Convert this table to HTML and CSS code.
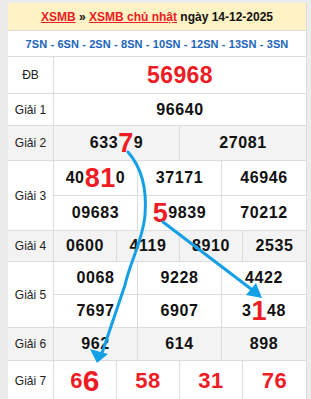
FILE: index.html
```html
<!DOCTYPE html>
<html>
<head>
<meta charset="utf-8">
<link rel="stylesheet" href="styles.css">
</head>
<body>
<div class="page">
  <div class="box">
    <div class="head"><a href="#">XSMB</a> » <a href="#">XSMB chủ nhật</a> ngày 14-12-2025</div>
    <div class="sub">7SN - 6SN - 2SN - 8SN - 10SN - 12SN - 13SN - 3SN</div>
    <div class="row db"><div class="lbl">ĐB</div><div class="vals c1"><div class="v red big">56968</div></div></div>
    <div class="row g1"><div class="lbl">Giải 1</div><div class="vals c1"><div class="v">96640</div></div></div>
    <div class="row g2 alt"><div class="lbl">Giải 2</div><div class="vals c2"><div class="v">633<span class="hl">7</span>9</div><div class="v">27081</div></div></div>
    <div class="row g3"><div class="lbl">Giải 3</div><div class="vals c3">
      <div class="v">40<span class="hl">81</span>0</div><div class="v">37171</div><div class="v">46946</div>
      <div class="v">09683</div><div class="v"><span class="hl">5</span>9839</div><div class="v">70212</div>
    </div></div>
    <div class="row g4 alt"><div class="lbl">Giải 4</div><div class="vals c4"><div class="v">0600</div><div class="v">4119</div><div class="v">8910</div><div class="v">2535</div></div></div>
    <div class="row g5"><div class="lbl">Giải 5</div><div class="vals c3">
      <div class="v">0068</div><div class="v">9228</div><div class="v">4422</div>
      <div class="v">7697</div><div class="v">6907</div><div class="v">3<span class="hl">1</span>48</div>
    </div></div>
    <div class="row g6 alt"><div class="lbl">Giải 6</div><div class="vals c3"><div class="v">962</div><div class="v">614</div><div class="v">898</div></div></div>
    <div class="row g7"><div class="lbl">Giải 7</div><div class="vals c4"><div class="v red mid">6<span class="hl">6</span></div><div class="v red mid">58</div><div class="v red mid">31</div><div class="v red mid">76</div></div></div>
  </div>
  <svg class="arrows" width="311" height="399" viewBox="0 0 311 399">
    <path d="M128 152 C 142 168, 147 190, 145 215 C 143 240, 130 262, 125 285 L 101 356" fill="none" stroke="#14a0e6" stroke-width="3" stroke-linecap="round"/>
    <polygon points="97,363 90,349 108,354" fill="#14a0e6"/>
    <path d="M163 222 L 255 292" fill="none" stroke="#14a0e6" stroke-width="3" stroke-linecap="round"/>
    <polygon points="262,298 246,295 256,283" fill="#14a0e6"/>
  </svg>
</div>
</body>
</html>
```
FILE: styles.css
```css
html, body {
  margin: 0;
  padding: 0;
  background: #ececec;
}
.page {
  position: relative;
  width: 311px;
  height: 399px;
  overflow: hidden;
  padding: 3px 4px 0 8px;
  box-sizing: border-box;
  font-family: "Liberation Sans", Arial, sans-serif;
}
.box {
  background: #fff;
  border-right: 1px solid #dcdcdc;
}
.head {
  height: 27px;
  background: #fff2c4;
  border-bottom: 1px solid #ddd;
  display: flex;
  align-items: center;
  justify-content: center;
  font-size: 12px;
  font-weight: bold;
  color: #111;
  white-space: pre;
}
.head a {
  color: #ee1c25;
  text-decoration: underline;
}
.sub {
  height: 25px;
  display: flex;
  align-items: center;
  justify-content: center;
  font-size: 11px;
  font-weight: bold;
  letter-spacing: 0.1px;
  color: #1a64b8;
  border-bottom: 1px solid #ddd;
}
.row {
  display: flex;
  border-bottom: 1px solid #ddd;
}
.row.alt { background: #f3f3f3; }
.lbl {
  width: 45px;
  flex: none;
  border-right: 1px solid #ddd;
  display: flex;
  align-items: center;
  justify-content: center;
  font-size: 12px;
  color: #222;
}
.vals {
  flex: 1;
  display: grid;
}
.c1 { grid-template-columns: 1fr; }
.c2 { grid-template-columns: 1fr 1fr; }
.c3 { grid-template-columns: 1fr 1fr 1fr; }
.c4 { grid-template-columns: 1fr 1fr 1fr 1fr; }
.v {
  display: flex;
  align-items: center;
  justify-content: center;
  font-size: 16px;
  font-weight: bold;
  letter-spacing: 0.6px;
  color: #111;
  border-right: 1px solid #ddd;
}
.c1 .v, .c3 .v:nth-child(3n), .c2 .v:last-child, .c4 .v:last-child { border-right: none; }
.c3 .v:nth-child(-n+3) { border-bottom: 1px solid #ddd; }
.g6 .v { border-bottom: none; }
.hl {
  color: #ee1c25;
  font-size: 27px;
  line-height: 1;
}
.red { color: #ee1c25; }
.big { font-size: 23px; letter-spacing: 0.4px; }
.mid { font-size: 22px; letter-spacing: 0.4px; }
.db { height: 36px; }
.g1 { height: 31px; }
.g2 { height: 34px; }
.g3 .v { height: 34px; }
.g4 { height: 30px; }
.g5 .v { height: 32px; }
.g6 { height: 32px; }
.g6 .v { height: 32px; }
.g7 { height: 39px; }
.g7 .hl { font-size: 30px; }
.arrows {
  position: absolute;
  left: 0;
  top: 0;
  pointer-events: none;
}
```
